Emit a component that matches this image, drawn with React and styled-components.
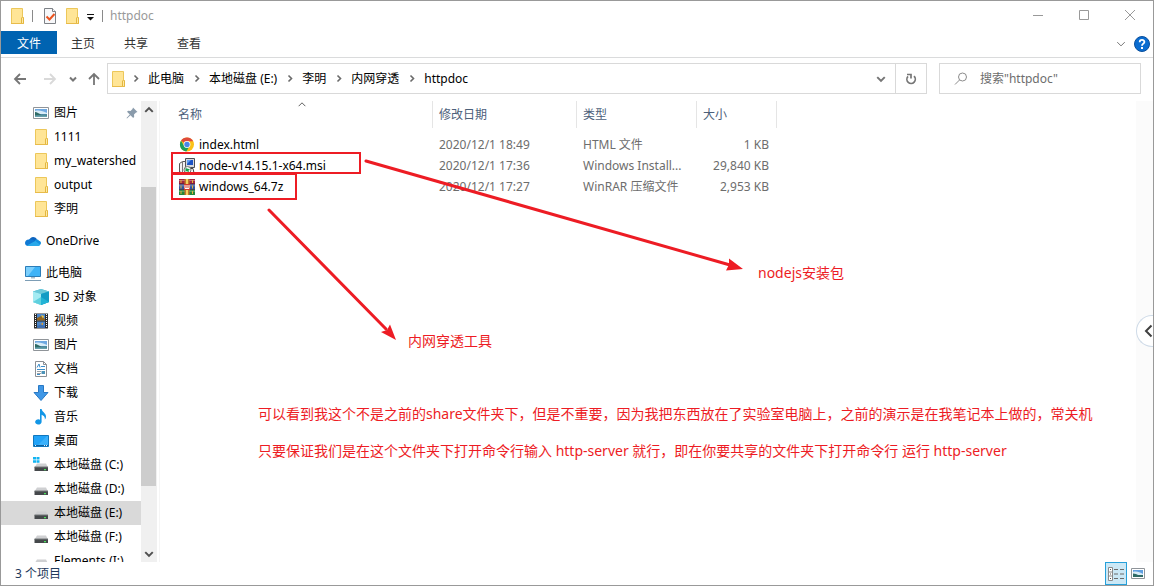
import React, { useState } from 'react';
import styled, { createGlobalStyle, css } from 'styled-components';

const GlobalStyle = createGlobalStyle`
  * {
    box-sizing: border-box;
  }

  body {
    margin: 0;
    background: #fff;
    color: #000;
    font-family: 'Noto Sans', 'Noto Sans CJK SC', sans-serif;
    font-size: 12px;
    line-height: 16px;
  }

  button, input {
    font: inherit;
    color: inherit;
    background: none;
    border: 0;
    padding: 0;
    margin: 0;
  }

  ul, ol {
    list-style: none;
    margin: 0;
    padding: 0;
  }

  a {
    color: inherit;
    text-decoration: none;
  }

  svg {
    display: block;
    flex: none;
  }
`;

const Window = styled.div`
  height: 100vh;
  display: flex;
  flex-direction: column;
  border: 1px solid #999;
  background: #fff;
  overflow: hidden;
`;

const TitleBar = styled.header`
  flex: none;
  height: 30px;
  display: flex;
  align-items: center;
  padding-left: 8px;
`;

const QuickButton = styled.button`
  width: 16px;
  height: 16px;
  margin-right: ${props => props.$gap || 0}px;
`;

const Divider = styled.span`
  width: 1px;
  height: 12px;
  margin-right: ${props => props.$gap}px;
  background: #8a8a8a;
`;

const Title = styled.h1`
  flex: 1;
  margin: 0;
  font-size: 12px;
  font-weight: 400;
  color: #999;
`;

const WindowButton = styled.button`
  align-self: flex-start;
  width: 46px;
  height: 28px;
  display: flex;
  align-items: center;
  justify-content: center;
  color: #999;
`;

const Ribbon = styled.nav`
  flex: none;
  height: 27px;
  display: flex;
  align-items: flex-start;
  gap: 1px;
  border-bottom: 1px solid #dadbdc;
`;

const Tab = styled.button`
  height: 23px;
  padding: 2px 14px 0;
  color: #333;

  ${props => props.$primary && css`
    padding: 2px 16px 0;
    margin-right: -1px;
    background: #0063b1;
    color: #fff;
  `}
`;

const RibbonTools = styled.div`
  margin-left: auto;
  height: 26px;
  display: flex;
  align-items: center;
  gap: 8px;
  padding-right: 3px;
`;

const AddressRow = styled.div`
  flex: none;
  height: 43px;
  display: flex;
  align-items: flex-start;
  padding: 5px 12px 0;
`;

const NavButtons = styled.div`
  height: 31px;
  width: 94px;
  display: flex;
  align-items: center;
`;

const NavButton = styled.button`
  width: ${props => props.$width}px;
  display: flex;
  color: ${props => (props.disabled ? '#d9d9d9' : '#767676')};
`;

const AddressBox = styled.div`
  flex: 1;
  height: 31px;
  display: flex;
  align-items: center;
  border: 1px solid #d9d9d9;
`;

const Crumbs = styled.ol`
  flex: 1;
  display: flex;
  align-items: center;
  padding-left: 2px;
`;

const Crumb = styled.li`
  display: flex;
  align-items: center;
  gap: 9px;
  padding-right: 8px;

  &:first-child {
    gap: 6px;
  }
`;

const BoxButton = styled.button`
  width: ${props => (props.$divided ? 31 : 28)}px;
  height: 29px;
  display: flex;
  align-items: center;
  justify-content: center;
  color: #767676;
  border-left: ${props => (props.$divided ? '1px solid #d9d9d9' : '0')};
`;

const SearchBox = styled.label`
  width: 202px;
  height: 31px;
  margin-left: 12px;
  display: flex;
  align-items: center;
  gap: 12px;
  padding-left: 14px;
  border: 1px solid #d9d9d9;
`;

const SearchInput = styled.input`
  flex: 1;
  min-width: 0;
  outline: none;

  &::placeholder {
    color: #6d6d6d;
    opacity: 1;
  }
`;

const Body = styled.div`
  flex: 1;
  min-height: 0;
  display: flex;
`;

const Tree = styled.ul`
  width: 140px;
  overflow: hidden;
`;

const TreeItem = styled.a`
  height: 24px;
  display: flex;
  align-items: center;
  gap: 5px;
  padding-left: ${props => (props.$root ? 24 : 32)}px;
  margin-top: ${props => (props.$root ? 8 : 0)}px;
  background: ${props => (props.$active ? '#d9d9d9' : 'transparent')};
  white-space: nowrap;
`;

const PinSlot = styled.span`
  margin-left: auto;
  padding-right: 3px;
`;

const ScrollTrack = styled.div`
  width: 16px;
  display: flex;
  flex-direction: column;
  background: #f0f0f0;
`;

const ScrollButton = styled.button`
  height: 17px;
  display: flex;
  align-items: center;
  justify-content: center;
  color: #505050;
`;

const ScrollGap = styled.div`
  flex: ${props => props.$size};
`;

const ScrollThumb = styled.div`
  flex: 299;
  margin-right: 1px;
  background: #cdcdcd;
`;

const Files = styled.main`
  position: relative;
  flex: 1;
  min-width: 0;
  margin-left: 2px;
  padding-left: 12px;
  border-left: 1px solid #f5f5f5;
`;

const FileTable = styled.table`
  width: 605px;
  table-layout: fixed;
  border-collapse: separate;
  border-spacing: 0;

  tbody::before {
    content: '';
    display: block;
    height: 6px;
  }
`;

const HeadCell = styled.th`
  position: relative;
  width: ${props => props.$width}px;
  height: 27px;
  padding: 0 0 0 6px;
  border-right: 1px solid #e5e5e5;
  color: #4c607a;
  font-weight: 400;
  text-align: left;
`;

const SortMark = styled.span`
  position: absolute;
  top: -1px;
  left: 50%;
  transform: translateX(-50%);
  color: #606060;
`;

const Cell = styled.td`
  height: 21px;
  padding: 0 8px 0 6px;
  color: #6d6d6d;
  text-align: ${props => props.$align || 'left'};
  white-space: nowrap;
`;

const NameCell = styled(Cell)`
  padding-left: 7px;
`;

const FileLink = styled.a`
  display: flex;
  align-items: center;
  gap: 4px;
  color: #000;
`;

const Markup = styled.svg`
  position: absolute;
  top: 0;
  left: 0;
  pointer-events: none;
`;

const Note = styled.p`
  position: absolute;
  left: ${props => props.$x}px;
  top: ${props => props.$y}px;
  margin: 0;
  color: #ed1c24;
  font-size: 14px;
  line-height: 37px;
  white-space: nowrap;
`;

const PreviewEdge = styled.aside`
  position: relative;
  width: 17px;
  background: #fbfbfb;
`;

const PreviewToggle = styled.button`
  position: absolute;
  top: 214px;
  left: 0;
  width: 17px;
  height: 32px;
  display: flex;
  align-items: center;
  justify-content: flex-end;
  border: 1px solid #cfdbe8;
  border-right: 0;
  border-radius: 16px 0 0 16px;
  background: #fff;
  color: #404040;
`;

const StatusBar = styled.footer`
  flex: none;
  height: 23px;
  display: flex;
  align-items: center;
  padding: 0 4px 0 14px;
  color: #1e395b;
`;

const ItemCount = styled.span`
  flex: 1;
`;

const ViewButton = styled.button`
  width: 22px;
  height: 23px;
  display: flex;
  align-items: center;
  justify-content: center;
  border: 1px solid ${props => (props.$active ? '#26a0da' : 'transparent')};
  background: ${props => (props.$active ? '#cbe8f6' : 'transparent')};
`;

/* icons */

const Chevron = ({ dir = 'down', size = 8, weight = 2 }) => {
  const paths = {
    down: 'M1 2.5 L4 5.5 L7 2.5',
    up: 'M1 5.5 L4 2.5 L7 5.5',
    right: 'M2.5 1 L5.5 4 L2.5 7',
    left: 'M5.5 1 L2.5 4 L5.5 7',
  };
  return (
    <svg width={size} height={size} viewBox="0 0 8 8" fill="none" stroke="currentColor" strokeWidth={(weight * 8) / size}>
      <path d={paths[dir]} />
    </svg>
  );
};

const CrumbChevron = () => (
  <svg width="8" height="9" viewBox="0 0 8 9" fill="none" stroke="#6a6a6a" strokeWidth="1.6">
    <path d="M2.5 1.5l3 3-3 3" />
  </svg>
);

const Arrow = ({ dir }) => {
  const paths = {
    left: 'M13 7H2M7 2L2 7l5 5',
    right: 'M1 7h11M7 2l5 5-5 5',
    up: 'M7 13V2M2 7l5-5 5 5',
  };
  return (
    <svg width="14" height="14" viewBox="0 0 14 14" fill="none" stroke="currentColor" strokeWidth="1.8">
      <path d={paths[dir]} />
    </svg>
  );
};

const FolderIcon = () => (
  <svg width="16" height="16" viewBox="0 0 16 16">
    <path d="M2.5.5h11v9h1v6h-12z" fill="#ffe596" stroke="#ecc75a" />
    <path d="M12.5 15V10l1-1 1 1v5.5h-2z" fill="#ffe9a6" stroke="#e3b73f" />
    <path d="M2 15.5h12" stroke="#e8bb4a" />
  </svg>
);

const CheckDocIcon = () => (
  <svg width="16" height="16" viewBox="0 0 16 16">
    <path d="M2.5.5h8l3 3v12h-11z" fill="#f7f8fa" stroke="#7d8186" />
    <path d="M10.5.5v3h3" fill="#fff" stroke="#7d8186" />
    <path d="M4.5 8.5l3 3 5-5.5" fill="none" stroke="#ea5420" strokeWidth="2" />
  </svg>
);

const CustomizeIcon = () => (
  <svg width="16" height="16" viewBox="0 0 16 16">
    <path d="M4 6.5h7" stroke="#111" />
    <path d="M4 9h7l-3.5 3.5z" fill="#111" />
  </svg>
);

const PictureIcon = () => (
  <svg width="16" height="16" viewBox="0 0 16 16">
    <path d="M.5 2.5h15v11H.5z" fill="#fff" stroke="#8f9499" />
    <path d="M2 4h12v8H2z" fill="#6fa8e0" />
    <path d="M2 6c4-1 8 0 12 2v1H2z" fill="#d8ecf8" />
    <path d="M2 7c2 0 4 1.500 6 2.500h6V12H2z" fill="#2f6b66" />
    <path d="M2 10.500c4 0 8-.5 12 0V12H2z" fill="#67a0ad" />
  </svg>
);

const PinIcon = () => (
  <svg width="12" height="12" viewBox="0 0 12 12">
    <path d="M7 .5l4.500 4.500-1.500.5L8 7.500l.2 2.300L7.200 11 4.500 8.200 1 11.500.5 11l3.300-3.500L1 4.800 2.200 3.800l2.300.2 2-2z" fill="#8a9bab" />
  </svg>
);

const OneDriveIcon = () => (
  <svg width="16" height="16" viewBox="0 0 16 16">
    <path d="M4 7.500C5 4 9.500 2.500 12 6.500L9 10z" fill="#0d64bf" />
    <path d="M3.800 6.500C1.500 6.500 0 8.200 0 10s1.500 3 3.200 3l7.300-4.500C8.500 6.800 6 6 3.800 6.500z" fill="#1079d4" />
    <path d="M11.800 6.500c-1 0-1.800.4-2.300 1.200L14 12.500c1.200-.3 2-1.200 2-2.400 0-1.500-1-2.300-2-2.400-.4-.8-1.200-1.200-2.200-1.200z" fill="#1490df" />
    <path d="M2 12.600L10.200 8l5 3.700c-.5.800-1.200 1.300-2.200 1.300H3.200c-.4 0-.8-.2-1.200-.4z" fill="#28a8ea" />
  </svg>
);

const ComputerIcon = () => (
  <svg width="16" height="16" viewBox="0 0 16 16">
    <path d="M.5 1.500h15v10H.5z" fill="#3fb3f7" stroke="#2c7db8" />
    <path d="M1 2h9L3 11H1z" fill="#7ccffc" />
    <path d="M6 12h4v1.500H6z" fill="#a9bcc9" />
    <path d="M0 15.500h16" stroke="#7d9db5" />
  </svg>
);

const CubeIcon = () => (
  <svg width="16" height="16" viewBox="0 0 16 16">
    <path d="M8 0l8 2.500v10.500L8 16 0 13V2.500z" fill="#35b6cf" />
    <path d="M8 0l8 2.500L8 5 0 2.500z" fill="#6cc9d9" />
    <path d="M0 2.500L8 5v11l-8-3z" fill="#a5ebf2" />
    <path d="M8 5l8-2.500v10.500L8 16z" fill="#139cc4" />
    <path d="M0 13l8-5v8z" fill="#5fd0de" />
    <path d="M16 13L8 8v8z" fill="#22b4d6" />
  </svg>
);

const VideoIcon = () => (
  <svg width="16" height="16" viewBox="0 0 16 16">
    <path d="M1 .5h14v15H1z" fill="#2b2b2b" />
    <path d="M4 1h8v6.500H4zM4 8.500h8V15H4z" fill="#4b86cc" />
    <path d="M4 5l4-2 4 3v1.500H4z" fill="#93651f" />
    <path d="M8 2l3 1-1 2.500z" fill="#f4c63a" />
    <path d="M4 13l4-1.500 4 1.500v2H4z" fill="#3f6fb0" />
    <path d="M5 10l3 1 2-1.500v2.500z" fill="#e9a12b" />
    <path d="M2.500 1v14M13.500 1v14" stroke="#fff" strokeDasharray="1 1" />
  </svg>
);

const DocumentIcon = () => (
  <svg width="16" height="16" viewBox="0 0 16 16">
    <path d="M2.500.5h8l3 3v12h-11z" fill="#fff" stroke="#8b8f94" />
    <path d="M10.500.5v3h3" fill="none" stroke="#8b8f94" />
    <path d="M4 6.500l2-3.500 1 3.500M8 5.500h4M4 8.500h8M4 13.500h3" fill="none" stroke="#3b8ecb" />
    <path d="M4 10.500h4M4 12.500h4" stroke="#9aa0a5" />
    <path d="M8.500 10h3.500v3H8.500z" fill="#4c93b8" />
  </svg>
);

const DownloadIcon = () => (
  <svg width="16" height="16" viewBox="0 0 16 16">
    <path d="M5.500.5h5v7h4.500L8 15.500 1 7.500h4.500z" fill="#3f97e6" stroke="#2878c4" />
  </svg>
);

const MusicIcon = () => (
  <svg width="16" height="16" viewBox="0 0 16 16">
    <path d="M7 0h1.600c.4 3 4.400 4 4.400 7.500 0 1.500-.6 2.500-1.200 3.200.5-2.500-.8-4.200-3.200-5V13a3.200 2.600 0 1 1-1.600-2.300z" fill="#1296e6" />
  </svg>
);

const DesktopIcon = () => (
  <svg width="16" height="16" viewBox="0 0 16 16">
    <path d="M.5 2.500h15v11H.5z" fill="#21a3f8" stroke="#1177bd" />
    <path d="M14 3L5 12h10V3z" fill="#3bb1fb" />
    <path d="M1 12.500h14" stroke="#0d5f9c" />
    <path d="M2 12.500h2M11 12.500h3" stroke="#dff2ff" strokeDasharray="1 1" />
  </svg>
);

const DriveIcon = ({ system }) => (
  <svg width="16" height="16" viewBox="0 0 16 16">
    <path d="M4 6.500h9l2 4H1.500z" fill="#cfd0d2" />
    <path d="M1.500 10h13.500v4H1.500z" fill="#45484b" />
    <path d="M1.500 10h13.500" stroke="#75787b" />
    <path d="M11 12h2v1.200h-2z" fill="#4be35b" />
    {system && <path d="M0 0h3v2.500H0zM3.500 0h3v2.500h-3zM0 3.200h3v2.500H0zM3.500 3.200h3v2.500h-3z" fill="#12b4f2" />}
  </svg>
);

const ChromeIcon = () => (
  <svg width="16" height="16" viewBox="0 0 16 16">
    <circle cx="8" cy="7.500" r="7" fill="#fbc116" />
    <path d="M8 7.500L2 3.800A7 7 0 0 1 14.200 4.300H8z" fill="#de4a3b" />
    <path d="M2 3.800A7 7 0 0 0 7.300 14.500L10.700 9.100 8 7.500 5.200 9z" fill="#1b9e5a" />
    <circle cx="8" cy="7.500" r="3.400" fill="#fff" />
    <circle cx="8" cy="7.500" r="2.700" fill="#4a86e8" />
  </svg>
);

const InstallerIcon = () => (
  <svg width="16" height="16" viewBox="0 0 16 16">
    <path d="M6.500.5h9v9h-9z" fill="#d5d8dc" stroke="#4a4e55" />
    <path d="M8 2h6v5H8z" fill="#1b52c4" />
    <path d="M8 2h4L8 6z" fill="#5fa0f2" />
    <path d="M.5 5.500l3-2h3v10l-2 1.500-4-1z" fill="#f1f1f1" stroke="#555" />
    <path d="M3.500 4v10.500" stroke="#777" />
    <path d="M10 10.500h4l1 4.500h-6z" fill="#f5f5f5" stroke="#444" />
    <circle cx="8.500" cy="12" r="3.500" fill="#eef7f1" stroke="#777" />
    <path d="M6.500 10l4.500 1.500-1.500 1 .5 2.500-2-2-1.500.8z" fill="#12a04a" />
  </svg>
);

const RarIcon = () => (
  <svg width="16" height="16" viewBox="0 0 16 16">
    <path d="M0 0h16v5H0z" fill="#a3263f" />
    <path d="M0 5.300h16v5H0z" fill="#31529e" />
    <path d="M0 10.600h16v5.400H0z" fill="#23863c" />
    <path d="M0 1.500h16M0 6.800h16M0 12.200h16" stroke="#ffffff55" />
    <path d="M0 5h16M0 10.500h16" stroke="#2a1430" strokeWidth=".7" />
    <path d="M5.500 0h5v16h-5z" fill="#c2762b" />
    <path d="M7 0h2v5H7zM7 11h2v5H7z" fill="#f3d35c" />
    <path d="M5 5h6v6H5z" fill="#d13b2d" />
    <path d="M6 6v3.500h4V6M8 6v3" fill="none" stroke="#fff" />
    <path d="M2 1v3M2 6.500v3M2 12v3M13.500 1v3M13.500 6.500v3M13.500 12v3" stroke="#e2b53a" />
  </svg>
);

const DetailsIcon = () => (
  <svg width="16" height="14" viewBox="0 0 16 14" fill="none">
    <path d="M.5.5h4v13h-4zM.5 5h4M.5 9h4" fill="#fff" stroke="#8a8a8a" />
    <path d="M2 2.500h1M2 7h1M2 11.500h1" stroke="#555" />
    <path d="M6 2.500h4M6 7h4M6 11.500h4M12 2.500h4M12 7h4M12 11.500h4" stroke="#6b6b6b" />
  </svg>
);

const ThumbnailIcon = () => (
  <svg width="14" height="12" viewBox="0 0 14 12">
    <path d="M.5.500h13v10H.500z" fill="#fff" stroke="#8f9499" />
    <path d="M2 2h10v7H2z" fill="#5f9fe0" />
    <path d="M2 4c3-1 7 0 10 2v1H2z" fill="#d8ecf8" />
    <path d="M2 5.500c2 0 4 1 5 1.500h5v2H2z" fill="#2f6b66" />
  </svg>
);

const HelpIcon = () => (
  <svg width="16" height="16" viewBox="0 0 16 16" fill="none">
    <circle cx="8" cy="8" r="7.500" fill="#0a6cd0" stroke="#0b4f9c" />
    <path d="M5.700 6.200c0-3 4.700-3 4.700-.2C10.400 7.600 8 7.800 8 9.700" stroke="#fff" strokeWidth="1.800" />
    <path d="M7 11h2v2H7z" fill="#fff" />
  </svg>
);

const RefreshIcon = () => (
  <svg width="12" height="12" viewBox="0 0 12 12" fill="none" stroke="currentColor" strokeWidth="1.700">
    <path d="M9 3.200A4.200 4.200 0 1 1 3 3.400" />
    <path d="M2 1.500h4V5.500" />
  </svg>
);

const SearchIcon = () => (
  <svg width="14" height="14" viewBox="0 0 14 14" fill="none" stroke="#8c8c8c">
    <circle cx="8.500" cy="5" r="4" />
    <path d="M5.500 8L1 12.500" />
  </svg>
);

const places = [
  { name: '图片', icon: PictureIcon, pinned: true },
  { name: '1111', icon: FolderIcon },
  { name: 'my_watershed', icon: FolderIcon },
  { name: 'output', icon: FolderIcon },
  { name: '李明', icon: FolderIcon },
  { name: 'OneDrive', icon: OneDriveIcon, root: true },
  { name: '此电脑', icon: ComputerIcon, root: true },
  { name: '3D 对象', icon: CubeIcon },
  { name: '视频', icon: VideoIcon },
  { name: '图片', icon: PictureIcon },
  { name: '文档', icon: DocumentIcon },
  { name: '下载', icon: DownloadIcon },
  { name: '音乐', icon: MusicIcon },
  { name: '桌面', icon: DesktopIcon },
  { name: '本地磁盘 (C:)', icon: DriveIcon, system: true },
  { name: '本地磁盘 (D:)', icon: DriveIcon },
  { name: '本地磁盘 (E:)', icon: DriveIcon },
  { name: '本地磁盘 (F:)', icon: DriveIcon },
  { name: 'Elements (I:)', icon: DriveIcon },
];

const crumbs = ['此电脑', '本地磁盘 (E:)', '李明', '内网穿透', 'httpdoc'];

const columns = [
  { label: '名称', width: 261, sorted: true },
  { label: '修改日期', width: 144 },
  { label: '类型', width: 120 },
  { label: '大小', width: 80 },
];

const files = [
  { name: 'index.html', icon: ChromeIcon, date: '2020/12/1 18:49', type: 'HTML 文件', size: '1 KB' },
  { name: 'node-v14.15.1-x64.msi', icon: InstallerIcon, date: '2020/12/1 17:36', type: 'Windows Install...', size: '29,840 KB' },
  { name: 'windows_64.7z', icon: RarIcon, date: '2020/12/1 17:27', type: 'WinRAR 压缩文件', size: '2,953 KB' },
];

function Sidebar() {
  const [active, setActive] = useState('本地磁盘 (E:)');

  return (
    <>
      <Tree>
        {places.map(({ name, icon: Icon, root, pinned, system }, i) => (
          <li key={i}>
            <TreeItem href="#" $root={root} $active={name === active} onClick={() => setActive(name)}>
              <Icon system={system} />
              {name}
              {pinned && <PinSlot><PinIcon /></PinSlot>}
            </TreeItem>
          </li>
        ))}
      </Tree>
      <ScrollTrack>
        <ScrollButton aria-label="向上滚动"><Chevron dir="up" size={10} /></ScrollButton>
        <ScrollGap $size={69} />
        <ScrollThumb />
        <ScrollGap $size={59} />
        <ScrollButton aria-label="向下滚动"><Chevron size={10} /></ScrollButton>
      </ScrollTrack>
    </>
  );
}

function FileList() {
  return (
    <FileTable>
      <thead>
        <tr>
          {columns.map(col => (
            <HeadCell key={col.label} $width={col.width}>
              {col.label}
              {col.sorted && <SortMark><Chevron dir="up" size={9} weight={1} /></SortMark>}
            </HeadCell>
          ))}
        </tr>
      </thead>
      <tbody>
        {files.map(({ name, icon: Icon, date, type, size }) => (
          <tr key={name}>
            <NameCell><FileLink href="#"><Icon />{name}</FileLink></NameCell>
            <Cell>{date}</Cell>
            <Cell>{type}</Cell>
            <Cell $align="right">{size}</Cell>
          </tr>
        ))}
      </tbody>
    </FileTable>
  );
}

function Annotations() {
  return (
    <>
      <Markup width="600" height="260" viewBox="160 101 600 260" fill="none" stroke="#ed1c24">
        <path d="M172 153h188v20H172zM172 174h124v25H172z" strokeWidth="2" />
        <path d="M366 161L730 265M269 210L386 329" strokeWidth="3" strokeLinecap="round" />
        <path d="M743 269L726 270.500L729 264.500L729 258.500zM396 340L381 332L387 330L390 324.500z" fill="#ed1c24" stroke="none" />
      </Markup>
      <Note $x={598} $y={153}>nodejs安装包</Note>
      <Note $x={248} $y={221}>内网穿透工具</Note>
      <Note $x={98} $y={294}>
        可以看到我这个不是之前的share文件夹下，但是不重要，因为我把东西放在了实验室电脑上，之前的演示是在我笔记本上做的，常关机
        <br />
        只要保证我们是在这个文件夹下打开命令行输入 http-server 就行，即在你要共享的文件夹下打开命令行 运行 http-server
      </Note>
    </>
  );
}

function App() {
  const [query, setQuery] = useState('');

  return (
    <Window>
      <GlobalStyle />
      <TitleBar>
        <QuickButton $gap={7} aria-label="httpdoc"><FolderIcon /></QuickButton>
        <Divider $gap={9} />
        <QuickButton $gap={6} aria-label="属性"><CheckDocIcon /></QuickButton>
        <QuickButton $gap={3} aria-label="新建文件夹"><FolderIcon /></QuickButton>
        <QuickButton $gap={3} aria-label="自定义快速访问工具栏"><CustomizeIcon /></QuickButton>
        <Divider $gap={7} />
        <Title>httpdoc</Title>
        <WindowButton aria-label="最小化">
          <svg width="10" height="10" stroke="currentColor"><path d="M0 5.500h10" /></svg>
        </WindowButton>
        <WindowButton aria-label="最大化">
          <svg width="10" height="10" stroke="currentColor" fill="none"><path d="M.5.5h9v9H.5z" /></svg>
        </WindowButton>
        <WindowButton aria-label="关闭">
          <svg width="10" height="10" stroke="currentColor"><path d="M0 0l10 10M10 0L0 10" /></svg>
        </WindowButton>
      </TitleBar>

      <Ribbon>
        <Tab $primary>文件</Tab>
        <Tab>主页</Tab>
        <Tab>共享</Tab>
        <Tab>查看</Tab>
        <RibbonTools>
          <NavButton $width={10} aria-label="展开功能区"><Chevron size={10} weight={1} /></NavButton>
          <button aria-label="帮助"><HelpIcon /></button>
        </RibbonTools>
      </Ribbon>

      <AddressRow>
        <NavButtons>
          <NavButton $width={30} aria-label="后退"><Arrow dir="left" /></NavButton>
          <NavButton $width={26} disabled aria-label="前进"><Arrow dir="right" /></NavButton>
          <NavButton $width={18} aria-label="最近浏览的位置"><Chevron /></NavButton>
          <NavButton $width={14} aria-label="上移"><Arrow dir="up" /></NavButton>
        </NavButtons>
        <AddressBox>
          <Crumbs>
            <Crumb><FolderIcon /><CrumbChevron /></Crumb>
            {crumbs.map((name, i) => (
              <Crumb key={name}>
                <a href="#">{name}</a>
                {i < crumbs.length - 1 && <CrumbChevron />}
              </Crumb>
            ))}
          </Crumbs>
          <BoxButton aria-label="以前的位置"><Chevron size={10} /></BoxButton>
          <BoxButton $divided aria-label="刷新"><RefreshIcon /></BoxButton>
        </AddressBox>
        <SearchBox>
          <SearchIcon />
          <SearchInput
            aria-label="搜索"
            placeholder={'搜索"httpdoc"'}
            value={query}
            onChange={e => setQuery(e.target.value)}
          />
        </SearchBox>
      </AddressRow>

      <Body>
        <Sidebar />
        <Files>
          <FileList />
          <Annotations />
        </Files>
        <PreviewEdge>
          <PreviewToggle aria-label="预览窗格">
            <svg width="10" height="14" viewBox="0 0 10 14" fill="none" stroke="currentColor" strokeWidth="2">
              <path d="M8.500 1.500L3 7l5.500 5.500" />
            </svg>
          </PreviewToggle>
        </PreviewEdge>
      </Body>

      <StatusBar>
        <ItemCount>3 个项目</ItemCount>
        <ViewButton $active aria-label="详细信息"><DetailsIcon /></ViewButton>
        <ViewButton aria-label="大缩略图"><ThumbnailIcon /></ViewButton>
      </StatusBar>
    </Window>
  );
}

export default App;
